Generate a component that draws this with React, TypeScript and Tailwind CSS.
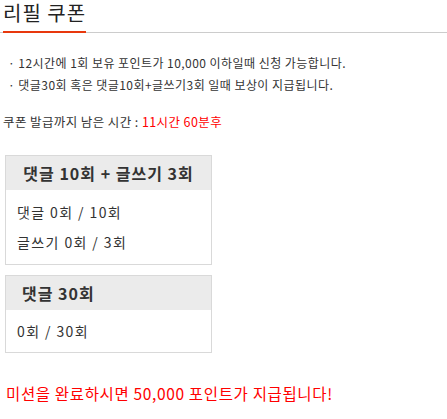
import React from "react";

const font = { fontFamily: '"Noto Sans CJK KR", "Noto Sans", sans-serif' };

function Box({ title, lines, centered }: { title: string; lines: string[]; centered?: boolean }) {
  return (
    <div className="ml-[5px] w-[207px] border border-[#d9d9d9]">
      <div
        className={`h-[34px] bg-[#ebebeb] flex items-center text-[16px] font-bold text-[#333] tracking-[1px] ${
          centered ? "justify-center" : "pl-4"
        }`}
      >
        {title}
      </div>
      <div
        className={`pl-[11px] text-[14px] text-[#333] leading-[30px] tracking-[1.4px] ${
          lines.length > 1 ? "py-[7px]" : "py-[6px]"
        }`}
      >
        {lines.map((l) => (
          <div key={l}>{l}</div>
        ))}
      </div>
    </div>
  );
}

export default function App() {
  return (
    <div className="w-[447px] h-[419px] bg-white text-[#333]" style={font}>
      <div className="flex border-b border-[#cccccc]">
        <div className="ml-[3px] -mb-px border-b-2 border-[#e8380d] pt-[0px] pb-[5px] text-[20px] leading-[26px] text-[#222] tracking-[1px]">
          리필 쿠폰
        </div>
      </div>
      <div className="mt-[19px] pl-[8px] text-[12px] leading-[22px] text-[#333] tracking-[0.45px]">
        <div>· 12시간에 1회 보유 포인트가 10,000 이하일때 신청 가능합니다.</div>
        <div>· 댓글30회 혹은 댓글10회+글쓰기3회 일때 보상이 지급됩니다.</div>
      </div>
      <div className="mt-[15px] pl-[3px] text-[12.5px] leading-[22px] text-[#333] tracking-[0.4px]">
        쿠폰 발급까지 남은 시간 : <span className="text-[#ff0000]">11시간 60분후</span>
      </div>
      <div className="mt-[22px]">
        <Box title="댓글 10회 + 글쓰기 3회" lines={["댓글 0회 / 10회", "글쓰기 0회 / 3회"]} centered />
      </div>
      <div className="mt-[10px]">
        <Box title="댓글 30회" lines={["0회 / 30회"]} />
      </div>
      <div className="mt-[29px] pl-[6px] text-[15.5px] leading-[22px] text-[#ff0000] tracking-[0.65px]">
        미션을 완료하시면 50,000 포인트가 지급됩니다!
      </div>
    </div>
  );
}
